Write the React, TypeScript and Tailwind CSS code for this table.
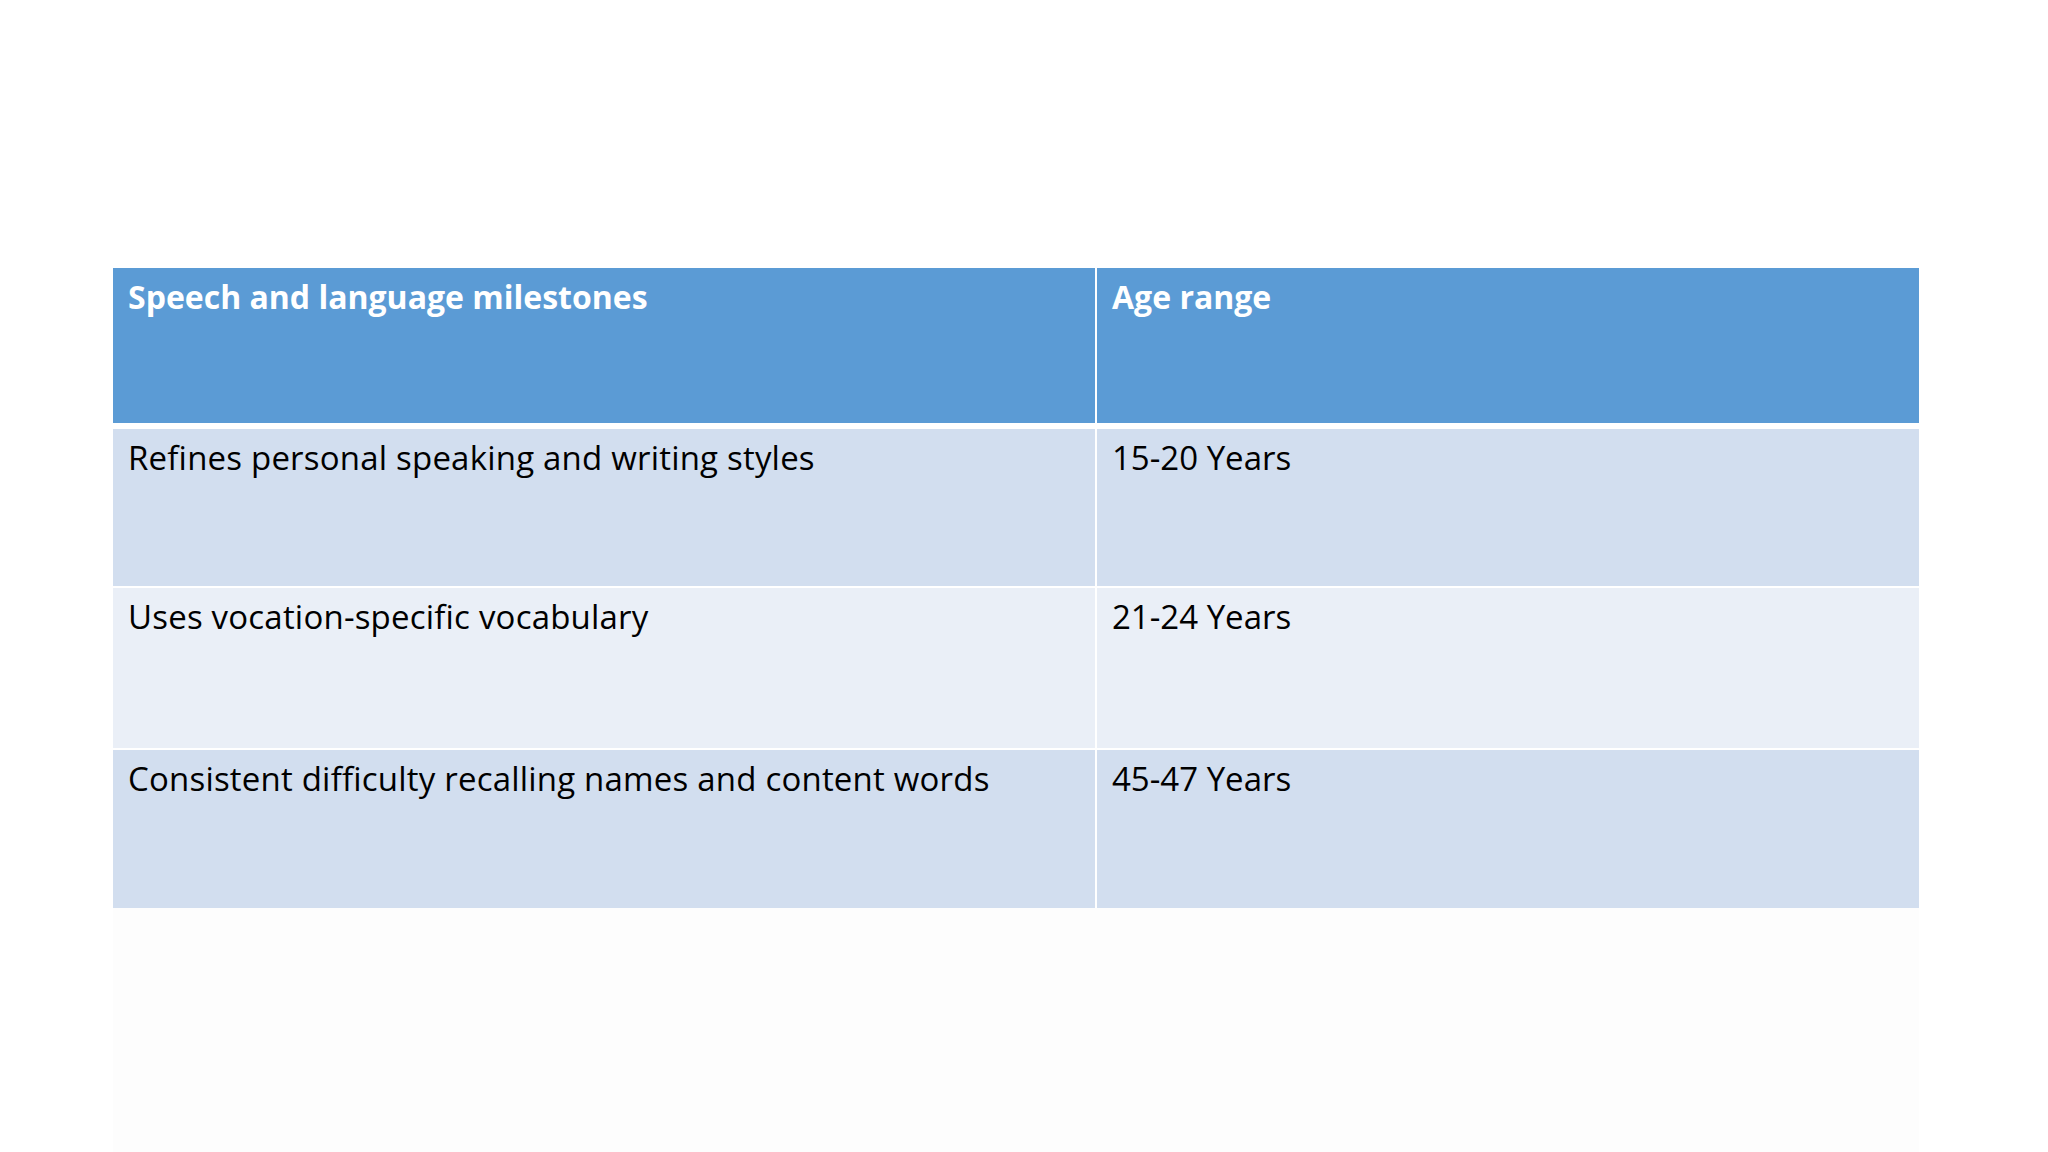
const rows = [
  { milestone: 'Refines personal speaking and writing styles', age: '15-20 Years', band: 'bg-[#d2deef]', h: 'h-[157px]' },
  { milestone: 'Uses vocation-specific vocabulary', age: '21-24 Years', band: 'bg-[#eaeff7]', h: 'h-[160px]' },
  { milestone: 'Consistent difficulty recalling names and content words', age: '45-47 Years', band: 'bg-[#d2deef]', h: 'h-[158px]' },
];

export default function App() {
  return (
    <div className="w-[2048px] h-[1152px] bg-white flex flex-col pt-[268px] pl-[113px] font-['Open_Sans','Lato',sans-serif] leading-[1.2]">
      <div className="w-[1806px] flex flex-col">
        {/* header */}
        <div className="grid grid-cols-[982px_1fr] gap-x-[2px] bg-white h-[155px] text-[32px]">
          <div className="bg-[#5b9bd5] text-white font-bold pl-[15px] pt-[10px]">Speech and language milestones</div>
          <div className="bg-[#5b9bd5] text-white font-bold pl-[15px] pt-[10px]">Age range</div>
        </div>
        <div className="h-[6px] bg-white" />

        {rows.map((r, i) => (
          <div key={i} className={`flex flex-col ${i > 0 ? 'border-t-2 border-white' : ''}`}>
            <div className={`grid grid-cols-[982px_1fr] gap-x-[2px] bg-white text-[33px] ${r.h}`}>
              <div className={`${r.band} text-black pl-[15px] pt-[9px] tracking-[0.2px]`}>{r.milestone}</div>
              <div className={`${r.band} text-black pl-[15px] pt-[9px]`}>{r.age}</div>
            </div>
          </div>
        ))}
      </div>
      <div className="w-[1806px] flex-1 bg-[#fdfdfd]" />
    </div>
  );
}
